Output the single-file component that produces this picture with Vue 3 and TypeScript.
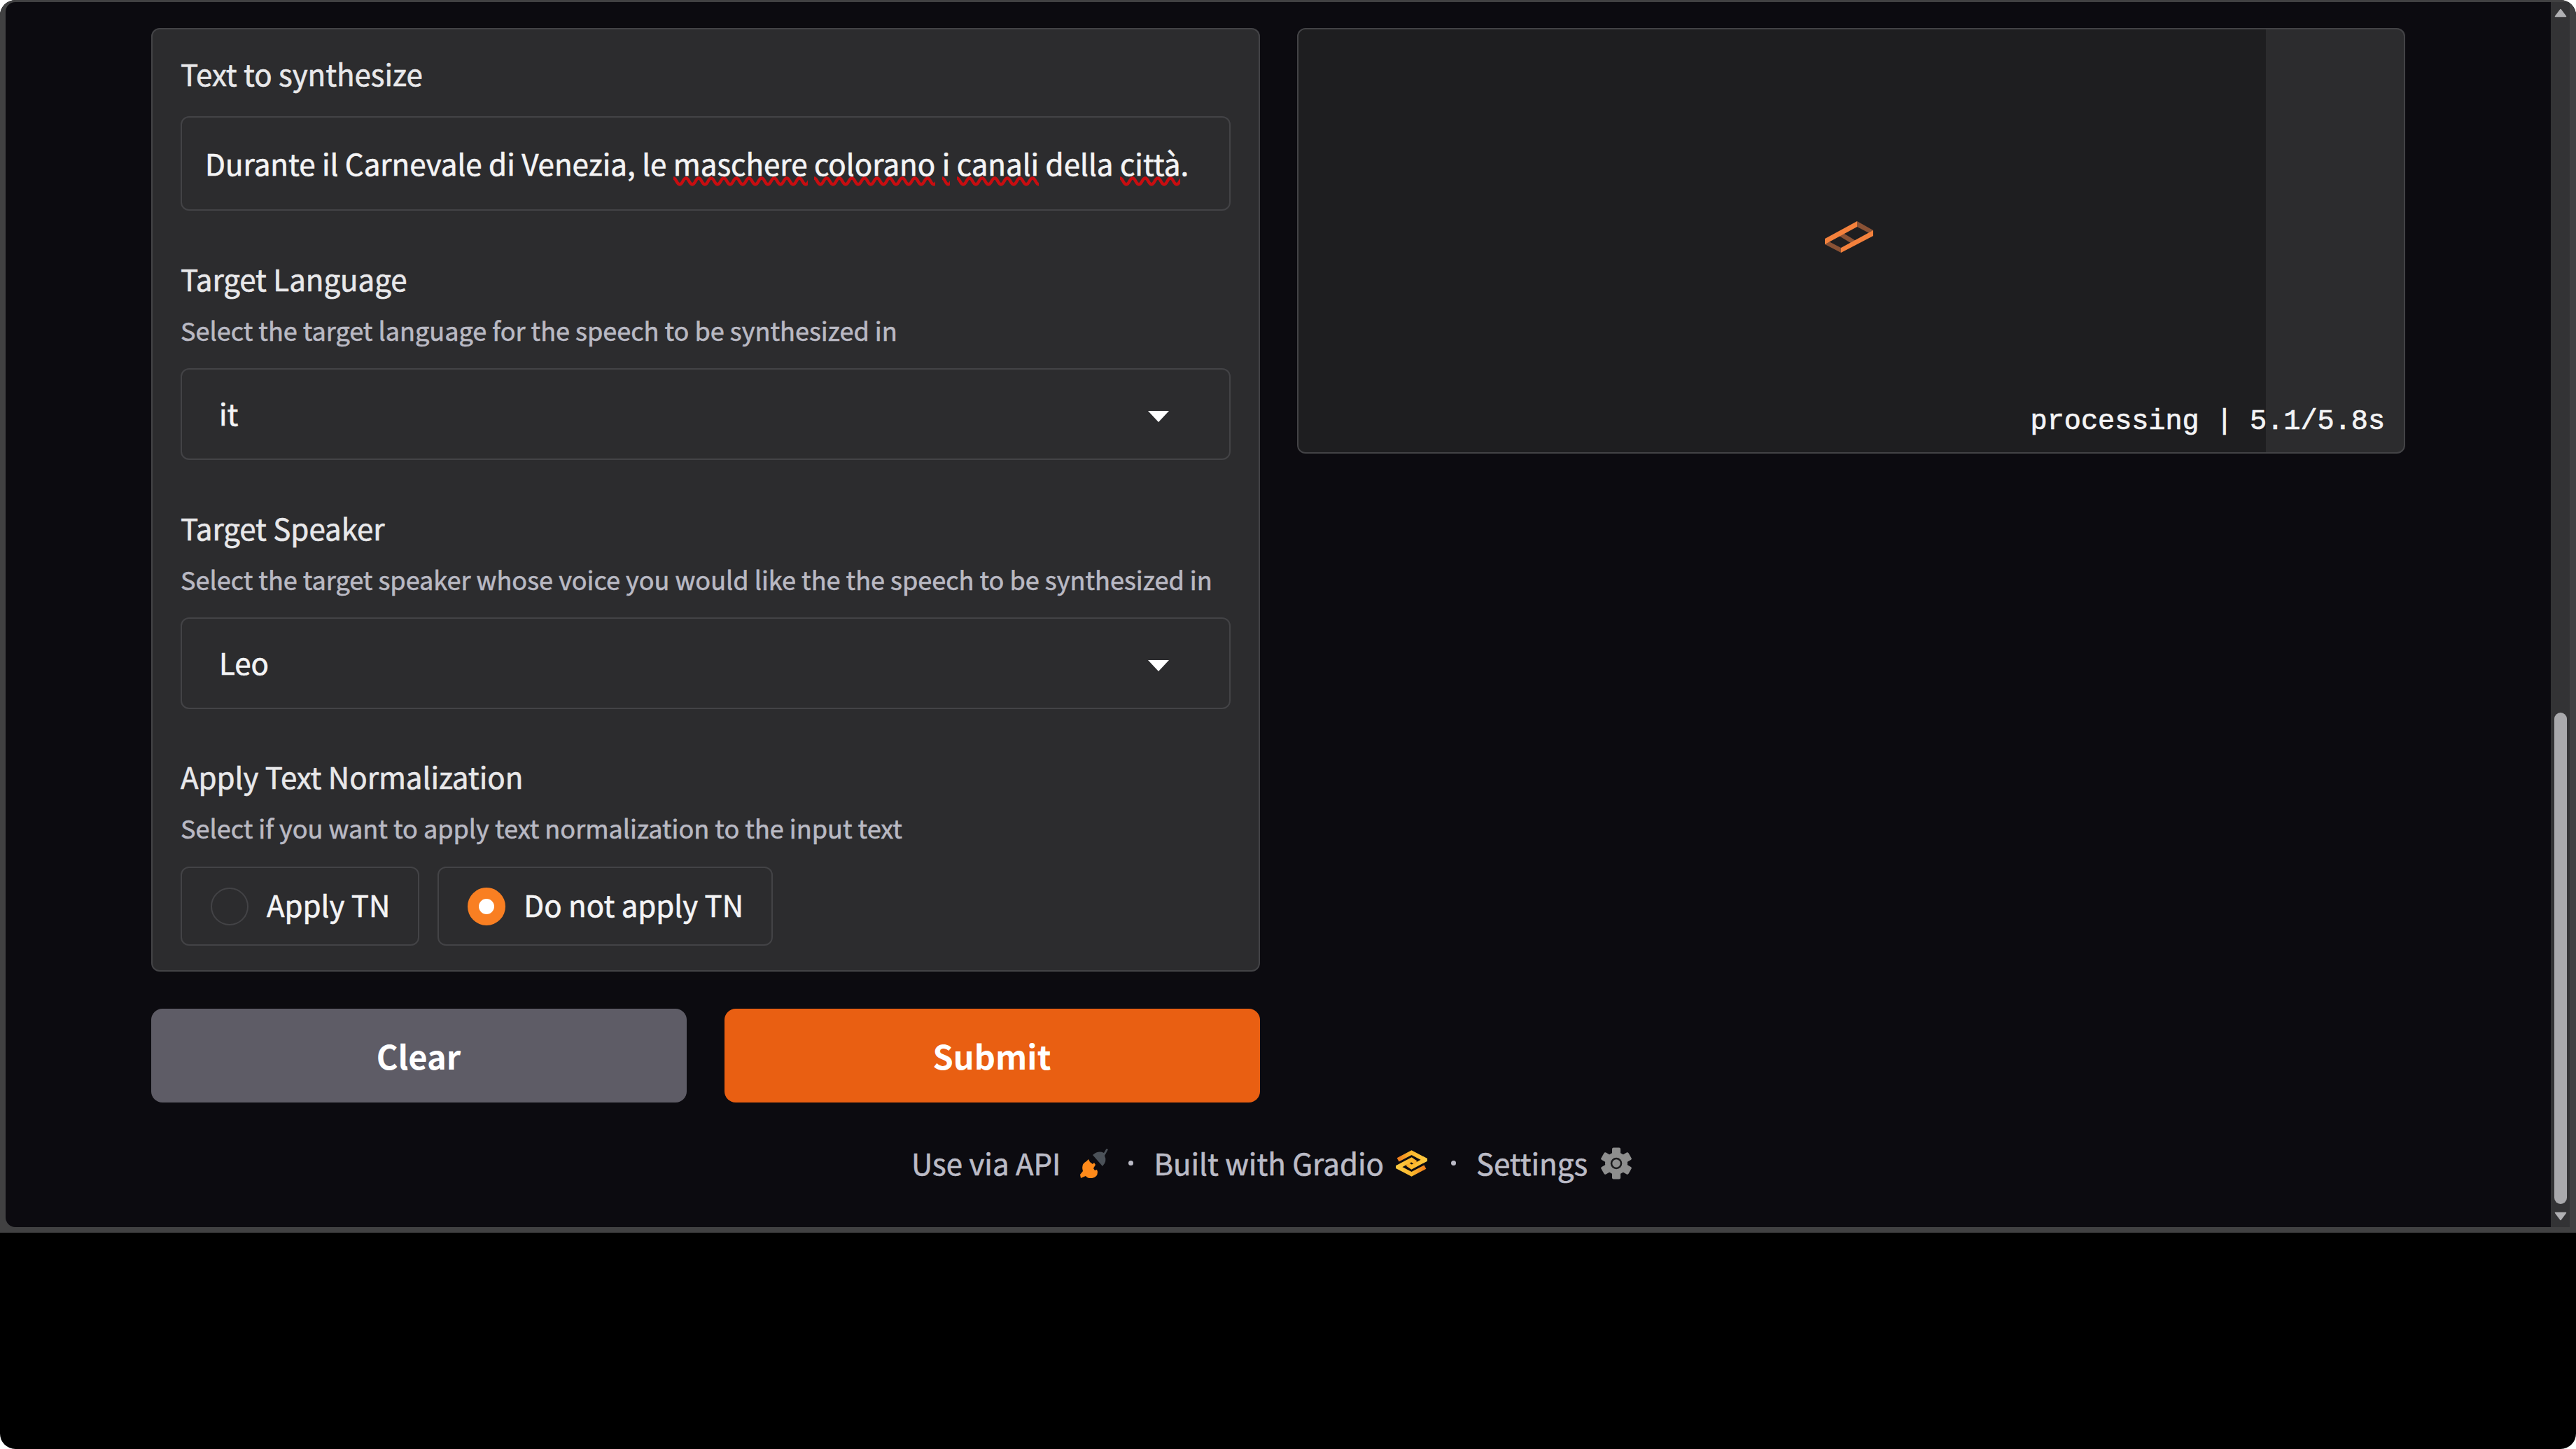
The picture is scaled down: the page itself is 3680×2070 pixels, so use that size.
<script setup lang="ts">
import { ref } from 'vue'

interface Word { text: string; flagged: boolean }

const sentence: Word[] = [
  { text: 'Durante il Carnevale di Venezia, le ', flagged: false },
  { text: 'maschere', flagged: true },
  { text: ' ', flagged: false },
  { text: 'colorano', flagged: true },
  { text: ' ', flagged: false },
  { text: 'i', flagged: true },
  { text: ' ', flagged: false },
  { text: 'canali', flagged: true },
  { text: ' della ', flagged: false },
  { text: 'città', flagged: true },
  { text: '.', flagged: false },
]

const selects = [
  { label: 'Target Language', info: 'Select the target language for the speech to be synthesized in', value: 'it' },
  { label: 'Target Speaker', info: 'Select the target speaker whose voice you would like the the speech to be synthesized in', value: 'Leo' },
]

const options = ['Apply TN', 'Do not apply TN']
const choice = ref('Do not apply TN')
</script>

<template>
  <div class="screen">
    <div class="window">
      <main class="page">
        <div class="columns">
          <section class="left">
            <div class="form">
              <div class="field">
                <div class="label">Text to synthesize</div>
                <div class="textbox"><span v-for="(w, i) in sentence" :key="i" :class="{ misspelt: w.flagged }">{{ w.text }}</span></div>
              </div>
              <div v-for="s in selects" :key="s.label" class="field">
                <div class="label">{{ s.label }}</div>
                <div class="info">{{ s.info }}</div>
                <div class="select">
                  <span class="value">{{ s.value }}</span>
                  <svg class="caret" viewBox="0 0 30 16"><path d="M0 0h30L15 16z" /></svg>
                </div>
              </div>
              <div class="field last">
                <div class="label">Apply Text Normalization</div>
                <div class="info">Select if you want to apply text normalization to the input text</div>
                <div class="radios">
                  <label v-for="o in options" :key="o" class="radio" @click="choice = o">
                    <i class="dot" :class="{ on: choice === o }"></i><span class="value">{{ o }}</span>
                  </label>
                </div>
              </div>
            </div>
            <div class="actions">
              <button class="btn clear">Clear</button>
              <button class="btn submit">Submit</button>
            </div>
          </section>
          <section class="output">
            <div class="elapsed"></div>
            <svg class="spinner" viewBox="0 0 70 46">
              <path d="M46 0 69 13v7L46 8zM23 15l23 14-6 4-23-14z" fill="#8a5235" />
              <path d="M0 26 23 38v7L0 33z" fill="#8a5235" />
              <path d="M0 25 46 0v8L0 33z" fill="#f4813c" />
              <path d="M23 38 69 13v8L23 45z" fill="#f4813c" />
            </svg>
            <div class="eta">processing | 5.1/5.8s</div>
          </section>
        </div>
        <footer class="footer">
          <span>Use via API</span>
          <svg class="plug" viewBox="0 0 40 42">
            <path d="M40 1 37.500 0 34 6q-8-4-16 3L32 25q7-7 3-15z" fill="#4b5158" />
            <path d="M1 42 0 37l4-5q-3-10 5-14l3-3 2 4 4 3 2-2 2 3-3 5 2 3 3-1 1 3q0 8-8 9-6 1-9-3z" fill="#ff8a1a" />
          </svg>
          <i class="sep"></i>
          <span>Built with Gradio</span>
          <svg class="logo" viewBox="0 0 44 38">
            <defs>
              <linearGradient id="top" x1="0" x2="1"><stop offset="0" stop-color="#ee7c1c" /><stop offset=".45" stop-color="#fbb62c" /><stop offset="1" stop-color="#fdc93f" /></linearGradient>
              <linearGradient id="bottom" x1="1" x2="0"><stop offset="0" stop-color="#ee7c1c" /><stop offset=".45" stop-color="#fbb62c" /><stop offset="1" stop-color="#fdc93f" /></linearGradient>
            </defs>
            <path d="M3 14 22 4l19 10-19 10-6-4" fill="none" stroke="url(#top)" stroke-width="6" />
            <path d="M41 24 22 34 3 24l19-10 6 4" fill="none" stroke="url(#bottom)" stroke-width="6" />
          </svg>
          <i class="sep"></i>
          <span>Settings</span>
          <svg class="gear" viewBox="-22 -23 44 46">
            <g fill="#8e8e8e">
              <circle r="16" />
              <rect v-for="a in [0, 60, 120]" :key="a" x="-6" y="-22.5" width="12" height="45" rx="2" :transform="`rotate(${a})`" />
            </g>
            <circle r="7" fill="#8e8e8e" stroke="#1c1c1e" stroke-width="2.6" />
          </svg>
        </footer>
      </main>
      <aside class="scrollbar">
        <svg class="arrow" viewBox="0 0 18 13"><path d="M9 1.500 16.500 11.500H1.500z" /></svg>
        <div class="thumb"></div>
        <svg class="arrow" viewBox="0 0 18 13"><path d="M9 11.500 16.500 1.500H1.500z" /></svg>
      </aside>
    </div>
  </div>
</template>

<style>
body { background: #fff; }
</style>

<style scoped>
* { box-sizing: border-box; }
.screen {
  width: 3680px; height: 2070px; overflow: hidden;
  background: #000; border-radius: 22px;
  font-family: "Noto Sans CJK SC", "Noto Sans", sans-serif;
  color: #f4f4f5;
  -webkit-text-stroke: 0.6px currentColor;
}
.window {
  width: 3680px; height: 1761px; padding: 3px 9px 8px 8px;
  display: flex; background: #414142;
}
.page {
  flex: 1; padding: 37px 207px 0 208px; background: #0c0b10;
  border-radius: 14px 0 0 14px;
}
.columns { display: flex; gap: 53px; align-items: flex-start; }
.left { width: 1584px; display: flex; flex-direction: column; gap: 53px; }
.form {
  height: 1348px; padding: 33px 40px 0; background: #2c2c2e;
  border: 2px solid #434346; border-radius: 12px;
}
.field { white-space: nowrap; margin-bottom: 67px; }
.last { margin-top: -1px; }
.label { height: 60px; line-height: 60px; font-size: 42px; color: #e8e8ea; }
.info { height: 52px; line-height: 52px; margin-top: 17px; font-size: 36.050px; color: #b9b9c3; }
.textbox {
  height: 135px; margin-top: 31px; padding: 0 33px; line-height: 129px;
  border: 2px solid #434346; border-radius: 12px; font-size: 42.050px;
}
.misspelt {
  padding-bottom: 6px;
  background: url("data:image/svg+xml,%3Csvg xmlns='http://www.w3.org/2000/svg' width='18' height='14'%3E%3Cpath d='M-4.500 7Q0 -2 4.500 7T13.500 7T22.500 7' fill='none' stroke='%23c80d10' stroke-width='4.300'/%3E%3C/svg%3E") 0 50px repeat-x;
}
.select {
  height: 131px; margin-top: 29px; padding: 0 86px 0 53px; display: flex;
  align-items: center; justify-content: space-between;
  border: 2px solid #434346; border-radius: 12px; font-size: 42px;
}
.value { padding-bottom: 5px; }
.caret { width: 30px; height: 16px; margin-top: 7px; fill: #fff; }
.radios { display: flex; gap: 26px; margin-top: 30px; }
.radio {
  height: 113px; padding: 0 40px 0 41px; display: flex; align-items: center; gap: 26px;
  border: 2px solid #434346; border-radius: 12px; font-size: 42px;
}
.radio .value { padding-bottom: 7px; }
.dot { width: 54px; height: 54px; border-radius: 50%; border: 2px solid #434346; }
.dot.on { border: 16.500px solid #f97f22; background: #fff; }
.actions { display: flex; gap: 54px; }
.btn {
  flex: 1; height: 134px; padding: 0 1px 0 0; border: 0; border-radius: 16px; color: #fff;
  font: 700 47px/132px "Noto Sans CJK SC", sans-serif; -webkit-text-stroke: 0;
}
.clear { background: #5e5c66; }
.submit { background: #e95f12; }
.output {
  position: relative; width: 1583px; height: 608px; display: flex;
  align-items: center; justify-content: center; overflow: hidden;
  background: #2c2c2e; border: 2px solid #434346; border-radius: 12px;
}
.elapsed { position: absolute; inset: 0 197px 0 0; background: #1e1e20; }
.spinner { position: relative; width: 70px; height: 46px; top: -5px; left: -3px; }
.eta {
  position: absolute; right: 27px; bottom: 13px; line-height: 60px;
  font-family: "Liberation Mono", monospace; font-size: 40.200px; white-space: nowrap;
  -webkit-text-stroke: 0.7px currentColor;
}
.footer {
  height: 60px; margin: 56px 0 0 1086px; display: flex; align-items: center;
  white-space: nowrap; font-size: 42px; line-height: 60px; color: #bbbbc6;
}
.plug { width: 40px; height: 42px; margin: 2px 0 0 28px; }
.sep { width: 7px; height: 7px; border-radius: 50%; background: #bbbbc6; margin: 0 29px; }
.logo { width: 45px; height: 40px; margin: 1px 5px 0 17px; }
.gear { width: 44px; height: 46px; margin: 2px 0 0 19px; }
.scrollbar {
  width: 27px; padding: 9px 4px 9px 5px; display: flex; flex-direction: column;
  background: #333335;
}
.arrow { width: 18px; height: 13px; fill: #b0b0b3; stroke: #b0b0b3; stroke-width: 1.500; stroke-linejoin: round; }
.thumb { width: 18px; height: 702px; margin: auto 0 11px; border-radius: 9px; background: #a9a9ac; }
</style>
